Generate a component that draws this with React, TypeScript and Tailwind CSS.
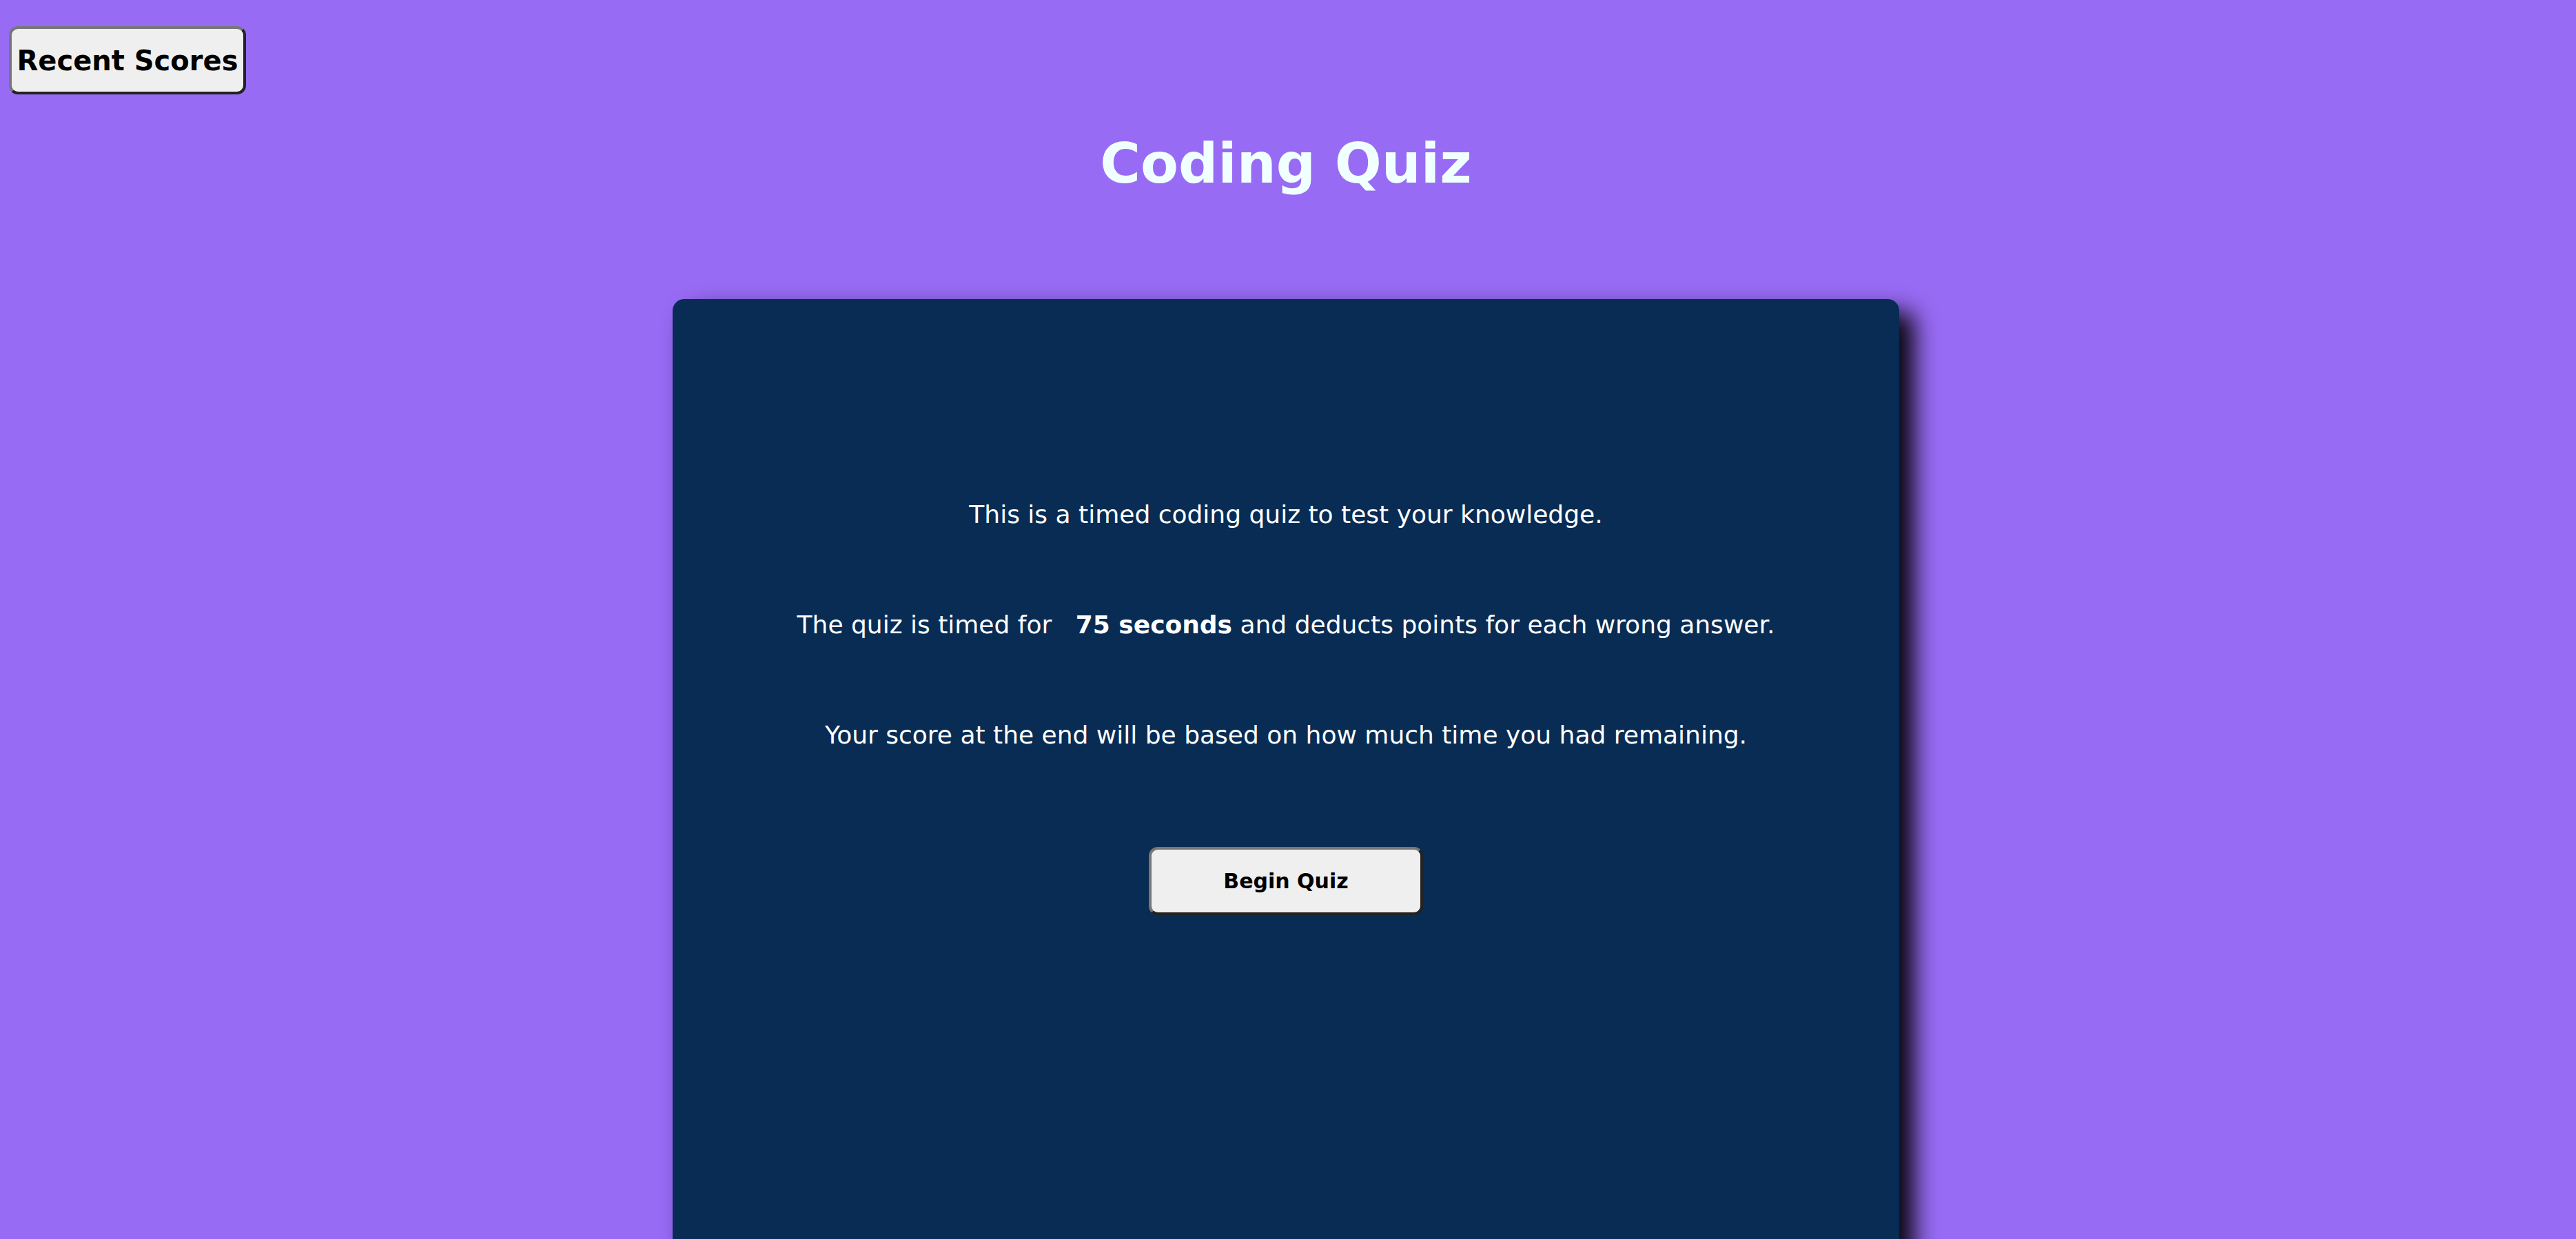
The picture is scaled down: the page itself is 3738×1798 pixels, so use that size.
import React from "react";

export default function App() {
  return (
    <div
      className="h-[1798px] w-full overflow-hidden bg-[#986bf5] flex flex-col pr-[6px]"
      style={{ fontFamily: '"DejaVu Sans", Verdana, sans-serif' }}
    >
      <div className="flex">
        <button className="ml-[13px] mt-[38px] w-[344px] h-[99px] rounded-[13px] bg-[#efefef] border-[4px] border-solid border-t-[#777777] border-l-[#777777] border-b-[#222222] border-r-[#222222] text-[40px] font-bold text-black leading-none">
          Recent Scores
        </button>
      </div>
      <h1 className="mt-[54px] text-center text-[80px] leading-[93px] font-bold text-[#f0ffff]">
        Coding Quiz
      </h1>
      <div className="mx-auto mt-[150px] w-[1780px] h-[1500px] shrink-0 rounded-[17px] bg-[#082c54] shadow-[22px_18px_34px_rgba(0,0,0,0.95)] flex flex-col items-center pt-[291px] text-white text-[36px] leading-[44px]">
        <p>This is a timed coding quiz to test your knowledge.</p>
        <p className="mt-[116px]">
          The quiz is timed for{"\u00a0\u00a0 "}
          <strong className="font-bold">75 seconds</strong> and deducts points for each wrong answer.
        </p>
        <p className="mt-[116px]">
          Your score at the end will be based on how much time you had remaining.
        </p>
        <button className="mt-[140px] w-[398px] h-[99px] rounded-[13px] bg-[#efefef] border-[4px] border-solid border-t-[#777777] border-l-[#777777] border-b-[#222222] border-r-[#222222] text-[30px] font-bold text-black leading-none">
          Begin Quiz
        </button>
      </div>
    </div>
  );
}
